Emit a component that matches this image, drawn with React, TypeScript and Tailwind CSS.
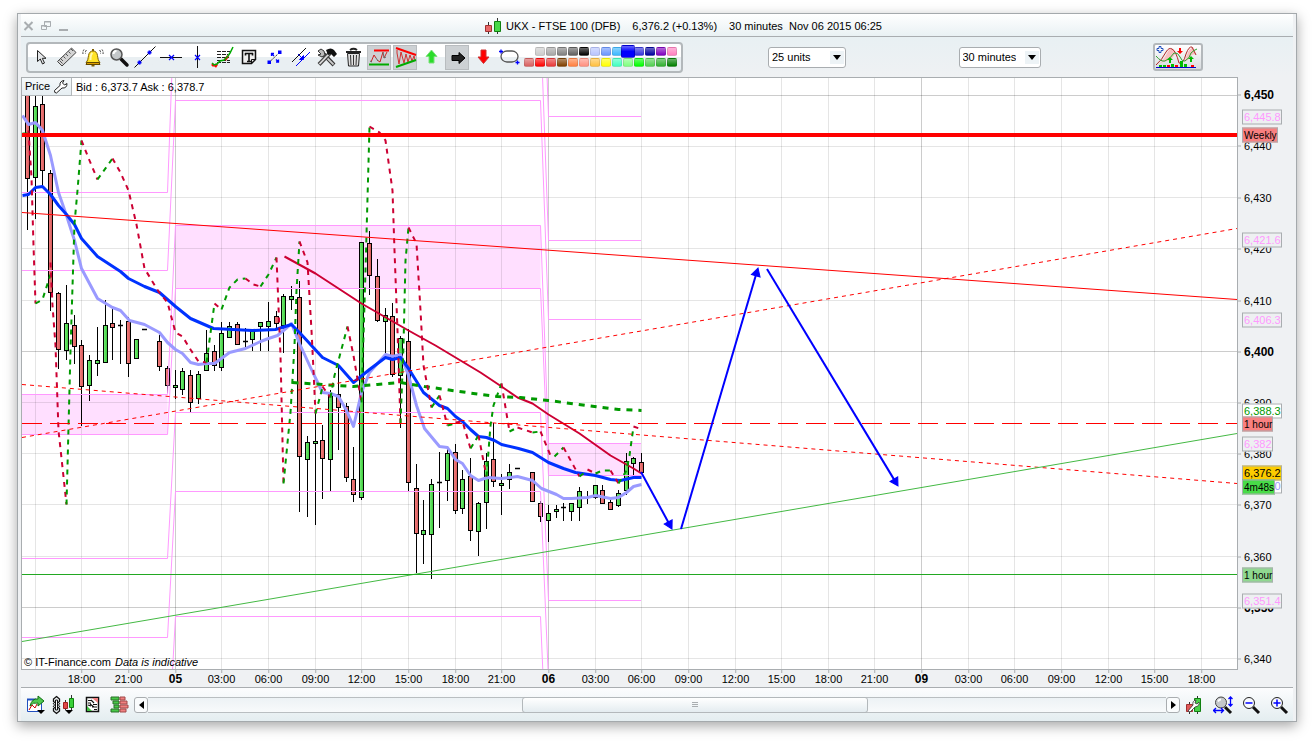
import { useState } from "react";
import type { ReactNode } from "react";

type Pt = [number, number];
// x, wick top, body top, body bottom, wick bottom, kind (g up, r down, d doji, n no body)
type Candle = [number, number, number, number, number, string];

const RED = "#cc0033";
const GREEN = "#009900";

// visible area of the chart canvas
const VIEW = { x: 22, y: 78, w: 1215, h: 591 };

const candles: Candle[] = [
  [27, 80, 80, 178, 229, "r"], [35, 80, 106, 177, 218, "g"], [42, 80, 104, 170, 186, "r"],
  [50, 170, 173, 292, 310, "r"], [58, 292, 293, 349, 368, "r"], [66, 285, 323, 350, 359, "g"],
  [74, 315, 325, 346, 363, "r"], [81, 340, 345, 386, 425, "r"], [89, 355, 360, 385, 400, "g"],
  [97, 327, 360, 363, 375, "g"], [105, 300, 325, 362, 362, "g"], [112, 308, 323, 327, 359, "r"],
  [120, 320, 325, 325, 363, "d"], [128, 317, 321, 363, 376, "r"], [136, 339, 339, 358, 358, "g"],
  [144, 329, 329, 329, 329, "d"], [159, 335, 341, 366, 370, "r"], [167, 366, 368, 385, 392, "r"],
  [175, 370, 385, 387, 398, "g"], [182, 368, 371, 389, 394, "g"], [190, 370, 375, 402, 411, "r"],
  [198, 371, 374, 398, 403, "g"], [206, 330, 353, 370, 370, "g"], [214, 345, 351, 365, 370, "r"],
  [221, 322, 333, 367, 370, "g"], [229, 322, 326, 337, 337, "g"], [237, 322, 324, 344, 344, "r"],
  [245, 328, 341, 341, 346, "d"], [252, 330, 331, 339, 350, "g"], [260, 322, 322, 326, 350, "g"],
  [268, 302, 321, 326, 350, "g"], [276, 311, 316, 323, 327, "r"], [283, 294, 296, 325, 352, "g"],
  [291, 286, 296, 299, 309, "g"], [299, 281, 297, 456, 511, "r"], [307, 436, 442, 459, 516, "g"],
  [315, 413, 441, 443, 524, "g"], [322, 425, 440, 458, 498, "r"], [330, 390, 393, 459, 491, "g"],
  [338, 366, 394, 407, 449, "r"], [346, 403, 406, 477, 481, "r"], [353, 447, 479, 494, 501, "r"],
  [361, 242, 242, 497, 499, "g"], [369, 231, 243, 275, 294, "r"], [377, 259, 276, 320, 321, "r"],
  [385, 308, 315, 321, 353, "g"], [392, 303, 316, 374, 376, "r"], [400, 336, 338, 375, 427, "g"],
  [408, 329, 341, 482, 491, "r"], [416, 464, 488, 533, 572, "r"], [423, 500, 530, 534, 563, "g"],
  [431, 479, 484, 534, 578, "g"], [439, 452, 482, 482, 527, "d"], [447, 449, 453, 480, 500, "g"],
  [455, 444, 452, 510, 513, "r"], [462, 470, 479, 508, 513, "g"], [470, 458, 476, 530, 540, "r"],
  [478, 502, 503, 531, 555, "g"], [486, 453, 461, 502, 528, "g"], [493, 423, 459, 481, 486, "r"],
  [501, 474, 483, 485, 514, "g"], [509, 464, 472, 479, 488, "g"], [517, 468, 468, 468, 468, "d"],
  [532, 472, 472, 501, 501, "r"], [540, 501, 503, 516, 521, "r"], [548, 505, 513, 520, 541, "g"],
  [556, 505, 509, 511, 517, "g"], [563, 503, 507, 507, 520, "d"], [571, 503, 503, 511, 520, "g"],
  [579, 487, 491, 507, 520, "g"], [587, 491, 497, 497, 503, "n"], [595, 485, 485, 497, 498, "g"],
  [602, 485, 490, 503, 503, "r"], [610, 500, 502, 509, 509, "r"], [618, 490, 493, 505, 506, "g"],
  [626, 453, 461, 490, 494, "g"], [633, 457, 458, 463, 474, "g"], [641, 453, 462, 472, 473, "r"],
];

const slowAverage: Pt[] = [
  [22, 195], [28, 194], [35, 187], [42, 186], [50, 194], [58, 205], [66, 214], [74, 224], [81, 238],
  [97, 256], [120, 271], [128, 278], [144, 286], [159, 292], [175, 306], [190, 318], [213, 328],
  [252, 330], [275, 329], [291, 324], [299, 332], [322, 357], [338, 365], [353, 382], [369, 369],
  [385, 357], [392, 359], [400, 357], [408, 368], [423, 392], [439, 405], [447, 408], [455, 416],
  [462, 421], [470, 429], [478, 436], [486, 437], [494, 440], [501, 444], [518, 448], [532, 452],
  [548, 462], [563, 468], [575, 472], [595, 475], [610, 479], [620, 480], [633, 477], [641, 477],
];

const fastAverage: Pt[] = [
  [22, 115], [28, 124], [35, 122], [42, 130], [50, 155], [58, 192], [66, 215], [74, 240], [81, 268],
  [97, 298], [112, 307], [120, 310], [129, 320], [144, 324], [159, 332], [167, 342], [175, 349],
  [182, 353], [190, 362], [198, 364], [206, 363], [214, 363], [229, 352], [245, 348], [260, 341],
  [268, 338], [277, 335], [283, 330], [291, 323], [299, 343], [310, 367], [322, 392], [330, 393],
  [338, 396], [346, 410], [353, 426], [361, 392], [369, 372], [385, 354], [392, 356], [400, 354],
  [408, 375], [416, 405], [424, 428], [439, 446], [447, 447], [455, 459], [462, 463], [470, 475],
  [478, 480], [487, 477], [501, 478], [517, 476], [532, 480], [541, 488], [556, 494], [563, 498],
  [571, 498], [587, 497], [595, 495], [610, 498], [618, 497], [626, 492], [633, 486], [641, 484],
];

const longAverage: Pt[] = [
  [284, 256], [315, 273], [361, 303], [408, 330], [435, 345], [480, 372], [501, 386], [517, 397],
  [532, 403], [548, 414], [579, 433], [610, 455], [633, 468], [641, 473],
];

const thickDashes: Pt[] = [
  [292, 382], [322, 384], [353, 386], [377, 384], [400, 382], [424, 386], [480, 394], [497, 396],
  [520, 397], [548, 400], [594, 406], [618, 409], [641, 410],
];

const stops: [string, Pt[]][] = [
  [RED, [[28, 130], [31, 177], [33, 245], [35, 303]]],
  [GREEN, [[22, 133], [27, 133]]],
  [GREEN, [[35, 303], [42, 299], [50, 274]]],
  [RED, [[50, 262], [52, 305], [55, 345], [58, 430], [66, 504]]],
  [GREEN, [[66, 504], [70, 350], [74, 223], [77, 190], [81, 140]]],
  [RED, [[81, 140], [89, 160], [97, 179]]],
  [GREEN, [[97, 179], [112, 158]]],
  [RED, [[112, 158], [120, 172], [128, 190], [136, 224], [144, 268], [158, 291], [167, 302], [175, 332], [182, 336], [190, 349], [198, 361], [206, 362]]],
  [GREEN, [[206, 362], [214, 303]]],
  [RED, [[214, 303], [221, 309]]],
  [GREEN, [[221, 309], [229, 287], [237, 279], [245, 278]]],
  [RED, [[245, 278], [253, 284], [260, 286]]],
  [GREEN, [[260, 286], [268, 274], [276, 257]]],
  [RED, [[276, 257], [280, 355], [283, 483]]],
  [GREEN, [[283, 483], [290, 412], [294, 345], [296, 290], [299, 241]]],
  [RED, [[299, 241], [307, 262], [311, 330], [313, 370], [315, 413]]],
  [GREEN, [[315, 413], [322, 387]]],
  [RED, [[322, 386], [330, 397]]],
  [GREEN, [[330, 397], [334, 375], [347, 326]]],
  [RED, [[347, 326], [353, 355], [361, 402]]],
  [GREEN, [[361, 402], [365, 270], [369, 126]]],
  [RED, [[369, 126], [379, 132], [385, 140], [392, 190], [394, 250], [397, 330], [400, 423]]],
  [GREEN, [[400, 423], [403, 345], [405, 260], [408, 227]]],
  [RED, [[408, 227], [416, 243], [420, 310], [423, 365], [431, 407]]],
  [GREEN, [[431, 407], [439, 395]]],
  [RED, [[439, 395], [447, 425]]],
  [GREEN, [[447, 425], [455, 423]]],
  [RED, [[455, 422], [462, 421], [470, 448]]],
  [GREEN, [[470, 448], [478, 435]]],
  [RED, [[478, 435], [486, 476]]],
  [GREEN, [[486, 476], [490, 425], [493, 405], [501, 383]]],
  [RED, [[501, 383], [509, 431]]],
  [GREEN, [[509, 431], [517, 427]]],
  [RED, [[517, 427], [532, 432]]],
  [GREEN, [[532, 432], [540, 431]]],
  [RED, [[540, 431], [550, 455]]],
  [GREEN, [[554, 456], [563, 447]]],
  [RED, [[563, 447], [579, 476]]],
  [GREEN, [[579, 476], [587, 470]]],
  [RED, [[587, 469], [595, 473]]],
  [GREEN, [[595, 473], [602, 470], [610, 470]]],
  [RED, [[610, 470], [618, 483]]],
  [GREEN, [[618, 483], [626, 470], [629, 455], [633, 426]]],
  [RED, [[633, 426], [639, 428]]],
];

// pivot levels of the three sessions and the steep lines that join them
const pivots = [
  { from: 22, to: 167.5, levels: [192.5, 270.5, 394.5, 434.5, 558.5, 637.5], zone: [394.5, 434.5] },
  { from: 175.5, to: 540.5, levels: [100.5, 225.5, 288.5, 412.5, 491.5, 616.5], zone: [225.5, 288.5] },
  { from: 548.5, to: 641, levels: [116.5, 240.5, 319.5, 443.5, 475.5, 600.5], zone: [443.5, 475.5] },
];
const joins: [number, number, number, number][] = [
  [167.5, 192.5, 175.5, -24], [167.5, 270.5, 175.5, 100.5], [167.5, 394.5, 175.5, 225.5],
  [167.5, 434.5, 175.5, 288.5], [167.5, 558.5, 175.5, 412.5], [167.5, 637.5, 175.5, 491.5],
  [167.5, 761, 175.5, 616.5],
  [540.5, -104, 548.5, 116.5], [540.5, 21, 548.5, 240.5], [540.5, 100.5, 548.5, 319.5],
  [540.5, 225.5, 548.5, 443.5], [540.5, 288.5, 548.5, 475.5], [540.5, 412.5, 548.5, 600.5],
  [540.5, 491.5, 548.5, 680], [540.5, 616.5, 548.5, 803],
];

const priceTicks: [number, string, boolean?][] = [
  [95, "6,450", true], [146, "6,440"], [197, "6,430"], [248, "6,420"], [300, "6,410"], [351, "6,400", true],
  [402, "6,390"], [453, "6,380"], [504, "6,370"], [556, "6,360"], [607, "6,350", true], [658, "6,340"],
];

const timeTicks: [number, string, boolean?][] = [
  [81, "18:00"], [128, "21:00"], [175, "05", true], [221, "03:00"], [268, "06:00"], [315, "09:00"],
  [361, "12:00"], [408, "15:00"], [455, "18:00"], [501, "21:00"], [548, "06", true], [595, "03:00"],
  [641, "06:00"], [688, "09:00"], [735, "12:00"], [781, "15:00"], [828, "18:00"], [874, "21:00"],
  [921, "09", true], [968, "03:00"], [1014, "06:00"], [1061, "09:00"], [1108, "12:00"],
  [1154, "15:00"], [1201, "18:00"],
];

const pivotTag = "border-[#a9adb0] bg-[#eef0f2] text-[#ff99ff] text-[11px]";
const priceTags: [number, string, string][] = [
  [116, "6,445.8", pivotTag],
  [135, "Weekly", "border-[#a9adb0] bg-[#f88080] text-black text-[10px]"],
  [240, "6,421.6", pivotTag],
  [319, "6,406.3", pivotTag],
  [410, "6,388.3", "border-[#a9adb0] bg-white text-[#009900] text-[11px]"],
  [423, "1 hour", "border-[#a9adb0] bg-[#f88080] text-black text-[10px]"],
  [443, "6,382", pivotTag],
  [485, "6,374.0", "border-[#a9adb0] bg-white text-[#9a9aff] text-[11px]"],
  [472, "6,376.2", "border-[#a9adb0] bg-[#fccc00] text-black text-[11px]"],
  [486, "4m48s", "border-[#a9adb0] bg-[#48dc48] text-black text-[10px]"],
  [574, "1 hour", "border-[#a9adb0] bg-[#90d890] text-black text-[10px]"],
  [600, "6,351.4", pivotTag],
];

const topColors = [
  "#cccccc", "#a6a6a6", "#808080", "#606060", "#000000", "#b8c4ff", "#6a96ff", "#3cb8ff",
  "#0000ff", "#3333dd", "#0000a0", "#8000c0", "#ff80c0",
];
const bottomColors = [
  "#d86060", "#ff0000", "#e83838", "#804000", "#ff8040", "#ff9080", "#ffc040", "#ffff00",
  "#40ffc0", "#80ff80", "#00ff00", "#50d050", "#30b030", "#008000",
];

function points(list: Pt[]) {
  return list.map(([x, y]) => `${x + 0.5},${y + 0.5}`).join(" ");
}

function left(x: number) {
  return `${((x - VIEW.x + 1.5) / (VIEW.w + 2)) * 100}%`;
}

function top(y: number) {
  return `${((y - VIEW.y + 1.5) / (VIEW.h + 2)) * 100}%`;
}

function Icon({ children, w = 24, h = 24 }: { children: ReactNode; w?: number; h?: number }) {
  return (
    <svg width={w} height={h} viewBox={`0 0 ${w} ${h}`} fill="none" aria-hidden="true" className="shrink-0">
      {children}
    </svg>
  );
}

function Magnifier() {
  return (
    <>
      <path d="M14 14l6 6" stroke="#111" strokeWidth="3.5" strokeLinecap="round" />
      <circle cx="9.500" cy="9.500" r="5.500" fill="#c4c8ca" stroke="#555" strokeWidth="1.500" />
      <path d="M6.500 9c0-2 1.500-3 3-3" stroke="#fff" strokeWidth="2" />
    </>
  );
}

const tools: { label: string; pressed?: boolean; icon: ReactNode }[] = [
  { label: "Select", icon: <path d="M8.500 5.500v11l2.800-2.500 2.200 5 2-1-2.200-4.700h3.700z" fill="#e4e6e8" stroke="#222" /> },
  {
    label: "Ruler",
    icon: (
      <>
        <path d="M2.500 16.500L16.500 3l4.500 4.500L7 21z" fill="#d4d4d4" stroke="#444" />
        <path d="M6 14l2 2M8.500 11.500l2 2M11 9l2 2M13.500 6.500l2 2M16 4l2 2M4.500 15.500l3 3" stroke="#555" />
      </>
    ),
  },
  {
    label: "Alert",
    icon: (
      <>
        <path d="M5 17.500c2-2 2-4 2.500-7 .5-3 2-4.500 4.500-4.500s4 1.500 4.500 4.500c.5 3 .5 5 2.500 7z" fill="#ffe326" stroke="#806000" />
        <path d="M9.500 15c0-4 .5-6 2-7" stroke="#fff8b0" strokeWidth="2" />
        <path d="M6 17.500h12l1 2H5z" fill="#e0a000" stroke="#604800" />
        <path d="M10.500 20h3v1.500h-3zM11 4h2v2h-2z" fill="#806000" />
        <path d="M5.500 5Q4 6.500 4.500 8.500M3 4.500Q1.500 6.500 2 9M18.500 5q1.500 1.500 1 3.500M21 4.500q1.500 2 1 4.500" stroke="#333" strokeDasharray="2 1" />
      </>
    ),
  },
  { label: "Zoom", icon: <Magnifier /> },
  {
    label: "Segment",
    icon: (
      <>
        <path d="M1.500 22.500L22.500 1.500" stroke="#111" />
        <path d="M4.500 17.500h4M6.500 15.500v4M14.500 7.500h4M16.500 5.500v4" stroke="#00f" strokeWidth="2" />
      </>
    ),
  },
  { label: "Horizontal line", icon: <path d="M1 12.500h22" stroke="#111" /> },
  { label: "Vertical line", icon: <path d="M12.500 1v22" stroke="#111" /> },
  {
    label: "Fibonacci",
    icon: (
      <>
        <path d="M6 6.500h13M6 9.500h11M6 12.500h12M6 15.500h13M6 17.500h13" stroke="#222" strokeDasharray="4 1" />
        <path d="M1 19l2 2M4 22l2-3M14 15l3-4" stroke="#f00" strokeWidth="2.500" />
        <path d="M1 18l2 2 3-1 3-3 4-1 4-4 2-3 3-6" stroke="#0a0" strokeWidth="1.500" />
      </>
    ),
  },
  {
    label: "Text",
    icon: (
      <>
        <path d="M5.500 5.500h13v9l-4 4h-9z" fill="#eee" stroke="#111" strokeWidth="1.500" />
        <path d="M18.500 14.500h-4v4" stroke="#111" />
        <path d="M8 8.500h8M12 8.500v8M10 16.500h4M8.500 8v2.500M15.500 8v2.500" stroke="#111" strokeWidth="1.600" />
      </>
    ),
  },
  {
    label: "Arrow",
    icon: (
      <>
        <path d="M6 17.500L17 7" stroke="#222" strokeDasharray="2 1" />
        <path d="M4.500 15.500h3.500V19H4.500zM15 5.500h3.500V9H15z" fill="#00f" />
        <path d="M8 8.500h3M8.500 8v3M8.500 8.500l2.500 2.500M16 17h-3M15.500 17.500v-3M15.500 17l-2.500-2.500" stroke="#00f" strokeWidth="1.300" />
      </>
    ),
  },
  {
    label: "Parallel",
    icon: (
      <>
        <path d="M3 17L17 3" stroke="#111" />
        <path d="M7 21L21 7" stroke="#00f" />
        <path d="M9 9l5 5" stroke="#00f" />
        <path d="M14.500 10.500v4h-4z" fill="#00f" stroke="#00f" />
      </>
    ),
  },
  {
    label: "Settings",
    icon: (
      <>
        <path d="M19 20L8.500 9" stroke="#333" strokeWidth="4" />
        <path d="M18.500 19.500L8 9" stroke="#ccc" strokeWidth="1.800" />
        <path d="M3 6l3-2 3 2 1 4-3 2-4-2 3-1z" fill="#bbb" stroke="#333" />
        <path d="M4 19.500L15 8" stroke="#444" strokeWidth="4" />
        <path d="M4.500 19L14 9" stroke="#ddd" strokeWidth="1.800" />
        <path d="M11 5q5-3 8 0l3 4-3 3-3-3-3 1z" fill="#111" />
      </>
    ),
  },
  {
    label: "Delete",
    icon: (
      <>
        <path d="M6.500 8.500h12l-1 12.500h-10z" fill="#e0e0e0" stroke="#222" />
        <path d="M9.500 10l.5 10M12.500 10v10M15.500 10L15 20" stroke="#333" />
        <path d="M5 7h15M9 5q3.500-2.500 7 0" stroke="#222" strokeWidth="2" />
      </>
    ),
  },
  {
    label: "Supports and resistances",
    pressed: true,
    icon: (
      <>
        <path d="M3 16l3-7 2 3M9 14l3 2 3-10M19 6l-3 6" stroke="#c22" />
        <path d="M2 15l2 1M8 12l2 3M15 6l1 6 2-1" stroke="#666" />
        <path d="M6 4.500h15" stroke="#f00" strokeWidth="2" />
        <path d="M1 18.500h20" stroke="#0a0" strokeWidth="2" />
      </>
    ),
  },
  {
    label: "Triangles",
    pressed: true,
    icon: (
      <>
        <path d="M3 4v3l2 11 2-12 3 11 2-9 2 8 2-7 2 6 2-5 1 4" stroke="#d03030" />
        <path d="M2 2l20 7" stroke="#f00" strokeWidth="2" />
        <path d="M2 21l20-7" stroke="#0a0" strokeWidth="2" />
      </>
    ),
  },
  { label: "Buy", icon: <path d="M12.500 5l5.500 6.500h-3V18h-5v-6.500H7z" fill="#2bdc2b" stroke="#7ae07a" /> },
  {
    label: "Next",
    pressed: true,
    icon: <path d="M6 9.500h7V6.500l6 5.500-6 5.500v-3H6z" fill="#222" stroke="#000" />,
  },
  { label: "Sell", icon: <path d="M10 5h5v7h3l-5.500 6.500L7 12h3z" fill="#f00" stroke="#c33" /> },
  {
    label: "Ellipse",
    icon: (
      <>
        <rect x="4" y="6" width="17" height="11" rx="6" stroke="#555" strokeWidth="1.300" />
        <path d="M2 6.500h4M4 4.500v4M18.500 17.500h4M20.500 15.500v4" stroke="#00f" strokeWidth="1.300" />
      </>
    ),
  },
];

function Toolbar() {
  const [color, setColor] = useState("#0000ff");
  const swatch = (c: string) => (
    <button
      key={c}
      aria-label={`Colour ${c}`}
      onClick={() => setColor(c)}
      className={
        c === color
          ? "relative z-10 -m-[2px] h-[13px] w-[14px] rounded-[2px] border border-black/20 bg-linear-to-b from-white/40 via-transparent to-transparent"
          : "h-[9px] w-[10px] rounded-[2px] border border-black/10 bg-linear-to-b from-white/40 to-transparent"
      }
      style={{ backgroundColor: c }}
    />
  );

  return (
    <div className="flex h-[31px] items-center rounded border-2 border-[#b3b8bb] bg-linear-to-b from-white from-50% to-[#e9eff2] to-50%">
      {tools.map((tool) => (
        <button
          key={tool.label}
          aria-label={tool.label}
          className={
            tool.pressed
              ? "mx-px h-[25px] w-6 border border-[#b8bcbf] bg-[#cdd1d4]"
              : "h-[25px] w-[26px] pl-px"
          }
        >
          <Icon>
            {tool.icon}
            {tool.label.endsWith(" line") && (
              <path d="M10 10l5 5M15 10l-5 5" stroke="#00f" strokeWidth="1.200" />
            )}
          </Icon>
        </button>
      ))}
      <div className="ml-[2px] flex flex-col items-end gap-[2px] pr-1">
        <div className="flex gap-px">{topColors.map(swatch)}</div>
        <div className="flex gap-px">{bottomColors.map(swatch)}</div>
      </div>
    </div>
  );
}

function Dropdown({ label, value, options }: { label: string; value: string; options: string[] }) {
  return (
    <div className="relative">
      <select
        aria-label={label}
        defaultValue={value}
        className="h-[21px] w-full appearance-none rounded-[3px] border border-[#a9adb0] bg-white pr-6 pl-[3px] text-[11px] text-black"
      >
        {options.map((o) => (
          <option key={o}>{o}</option>
        ))}
      </select>
      <span className="pointer-events-none absolute inset-y-1 right-[2px] flex w-[14px] items-center justify-center bg-[#edf3f6]">
        <svg width="8" height="5" viewBox="0 0 8 5" aria-hidden="true">
          <path d="M0 0h8L4 5z" />
        </svg>
      </span>
    </div>
  );
}

function Arrow({ from, to }: { from: Pt; to: Pt }) {
  const len = Math.hypot(to[0] - from[0], to[1] - from[1]);
  const angle = (Math.atan2(to[1] - from[1], to[0] - from[0]) * 180) / Math.PI;
  return (
    <g transform={`translate(${from[0]} ${from[1]}) rotate(${angle})`} stroke="#0000ff" fill="#0000ff">
      <path d={`M0 0H${len - 6}`} strokeWidth="2" />
      <path d={`M${len} 0l-8-4.500v9z`} strokeWidth="1" />
    </g>
  );
}

function Plot() {
  return (
    <svg
      viewBox={`${VIEW.x} ${VIEW.y} ${VIEW.w} ${VIEW.h}`}
      preserveAspectRatio="none"
      className="absolute inset-0 h-full w-full"
      fill="none"
      role="img"
      aria-label="FTSE 100 candlestick chart"
    >
      <defs>
        <clipPath id="below-header">
          <rect x="22" y="96" width="1215" height="573" />
        </clipPath>
        <linearGradient id="up">
          <stop offset="0" stopColor="#7cf07c" />
          <stop offset="1" stopColor="#36c836" />
        </linearGradient>
        <linearGradient id="down">
          <stop offset="0" stopColor="#f48484" />
          <stop offset="1" stopColor="#d65858" />
        </linearGradient>
      </defs>

      {/* pivot zones */}
      {pivots.map((p) => (
        <rect key={p.from} x={p.from} y={p.zone[0]} width={p.to - p.from} height={p.zone[1] - p.zone[0]} fill="#ffdfff" />
      ))}

      {/* grid */}
      <path d="M35.500 78V669" stroke="#000" strokeOpacity="0.1" />
      {timeTicks.map(([x, , strong]) => (
        <path key={x} d={`M${x + 0.5} 78V669`} stroke="#000" strokeOpacity={strong ? 0.2 : 0.1} />
      ))}
      {priceTicks.map(([y, , strong]) => (
        <path key={y} d={`M22 ${y + 0.5}H1237`} stroke="#000" strokeOpacity={strong ? 0.2 : 0.1} />
      ))}

      {/* candles */}
      <g clipPath="url(#below-header)">
        {candles.map(([x, hi, t, b, lo, kind]) => (
          <g key={x} stroke="#000">
            <path d={`M${x + 0.5} ${hi}V${lo + 1}`} />
            {kind === "d" && <path d={`M${x - 2} ${t + 0.5}h5`} strokeWidth="1.500" />}
            {(kind === "g" || kind === "r") && (
              <rect x={x - 1.5} y={t + 0.5} width="4" height={Math.max(b - t, 2)} fill={kind === "g" ? "url(#up)" : "url(#down)"} />
            )}
          </g>
        ))}
      </g>

      {/* pivot levels */}
      <g stroke="#ff99ff">
        {pivots.map((p) => p.levels.map((y) => <path key={`${p.from}-${y}`} d={`M${p.from} ${y}H${p.to}`} />))}
        {joins.map(([x1, y1, x2, y2]) => (
          <path key={`${x1}-${y1}`} d={`M${x1} ${y1}L${x2} ${y2}`} />
        ))}
      </g>

      {/* moving averages */}
      <g strokeLinejoin="round">
        <polyline points={points(fastAverage)} stroke="#9a9aff" strokeWidth="3" />
        <polyline points={points(slowAverage)} stroke="#0032ff" strokeWidth="3" />
        <polyline points={points(longAverage)} stroke={RED} strokeWidth="2" />
        <polyline points={points(thickDashes)} stroke={GREEN} strokeWidth="3" strokeDasharray="6 6" />
      </g>
      {stops.map(([color, list], i) => (
        <polyline key={i} points={points(list)} stroke={color} strokeWidth="2" strokeDasharray="5 5" />
      ))}

      {/* trend lines and alerts */}
      <path d="M22 384.500L1237 483.500M22 437.500L1237 228.500" stroke="#ff0000" strokeDasharray="4 4" />
      <path d="M22 212.500L1237 299.500" stroke="#ff0000" />
      <path d="M22 641.500L1237 433.500" stroke="#44b944" />
      <path d="M22 574.500H1237" stroke="#22a822" />
      <path d="M22 423.500H1237" stroke="#ff0000" strokeDasharray="20 8" />
      <path d="M22 135H1237" stroke="#ff0000" strokeWidth="4" />

      <Arrow from={[641, 472]} to={[672, 529]} />
      <Arrow from={[681, 529]} to={[758, 268]} />
      <Arrow from={[767, 269]} to={[898, 486]} />
    </svg>
  );
}

function CandlePair() {
  return (
    <Icon w={17} h={16}>
      <path d="M3.500 4v12M12.500 0v16" stroke="#333" />
      <path d="M.500 7.500h6v6h-6z" fill="#e86868" stroke="#a03030" />
      <path d="M9.500 3.500h6v10h-6z" fill="#48d848" stroke="#108010" />
    </Icon>
  );
}

function ZoomIcon({ sign }: { sign: string }) {
  return (
    <Icon w={20} h={20}>
      <path d="M12 12l6 6" stroke="#111" strokeWidth="3" />
      <circle cx="8" cy="8" r="5.500" fill="#f8fafc" stroke="#222" />
      <path d={sign === "+" ? "M4.500 8h7M8 4.500v7" : "M4.500 8h7"} stroke="#00f" strokeWidth="1.500" />
    </Icon>
  );
}

function BottomBar() {
  return (
    <div className="flex h-[33px] shrink-0 items-center bg-linear-to-b from-[#fcfdfe] to-[#e4edf0] pr-1 pl-[5px]">
      <button aria-label="Export" className="w-[25px]">
        <Icon w={20} h={20}>
          <path d="M1.500 4.500h14v12h-14z" fill="#fff" stroke="#2050c0" />
          <path d="M1 4.500h9" stroke="#2050c0" strokeWidth="2" />
          <path d="M3 15l3-5 3 3 2-4" stroke="#c00" />
          <path d="M4 11q2-8 8-7V1l6 5-6 5V8q-5-1-8 3z" fill="#50c850" stroke="#107010" />
          <path d="M11 15h8l-4 4z" fill="#000" />
        </Icon>
      </button>
      <button aria-label="Linked charts" className="mr-2 w-[25px]">
        <Icon w={25} h={20}>
          <path d="M5.500 1.500l3 2.500v2.500l-3 2.500-3-2.500V4zM5.500 11l3 2.500V16l-3 2.500-3-2.500v-2.500z" stroke="#111" strokeWidth="1.300" />
          <path d="M4.500 5h2v10h-2z" fill="#fff" stroke="#111" />
          <path d="M2 8l1.500 2L2 12M9 8l-1.500 2L9 12" stroke="#111" />
          <path d="M14.500 5v10M20.500 0v15" stroke="#333" />
          <path d="M12.500 7.500h4v6h-4z" fill="#e04848" stroke="#a02020" />
          <path d="M18.500 3.500h4v9h-4z" fill="#38d038" stroke="#108010" />
          <path d="M14 15h8l-4 4z" fill="#000" />
        </Icon>
      </button>
      <button aria-label="Orders" className="mr-[10px] w-4">
        <Icon w={16} h={18}>
          <path d="M2.500 1.500h12v14h-12z" fill="#fff" stroke="#111" strokeWidth="1.500" />
          <path d="M8 2h6v5z" fill="#f08080" />
          <path d="M3 10l5 5H3z" fill="#40c040" />
          <path d="M4 4.500h4M4 7h3M9 8.500h4M4 9l3 1M8 11h5M10 13.500h3M7 4l3 3M6 8l4 3" stroke="#111" strokeWidth="1.200" />
        </Icon>
      </button>
      <button aria-label="Market depth" className="mr-1 w-5">
        <Icon w={20} h={18}>
          <path d="M1 1h8v3H1zM3 5h6v3H3zM4 9h5v3H4zM1 13h8v3H1z" fill="#48c848" stroke="#287028" />
          <path d="M10 1h5v3h-5zM10 5h7v3h-7zM10 9h8v3h-8zM10 13h6v3h-6z" fill="#f08080" stroke="#a04848" />
        </Icon>
      </button>
      <div className="flex flex-1">
        <button aria-label="Scroll left" className="flex h-[16px] w-[14px] items-center justify-center rounded-[3px] border border-[#a9adb0] bg-[#fafcfd]">
          <Icon w={5} h={8}><path d="M5 0v8L0 4z" fill="#000" /></Icon>
        </button>
        <div role="scrollbar" aria-controls="chart" aria-valuenow={52} className="flex h-[16px] flex-1 border-y border-[#b9bec1] bg-linear-to-b from-[#edf2f5] to-[#f8fafb]">
          <div className="flex-[375]" />
          <div className="-my-px flex flex-[344] items-center justify-center rounded-[3px] border border-[#b3b8bb] bg-linear-to-b from-white to-[#e4ecf0]">
            <Icon w={6} h={6}><path d="M0 .500h6M0 2.500h6M0 4.500h6" stroke="#a9adb0" /></Icon>
          </div>
          <div className="flex-[299]" />
        </div>
        <button aria-label="Scroll right" className="flex h-[16px] w-[14px] items-center justify-center rounded-[3px] border border-[#a9adb0] bg-[#fafcfd]">
          <Icon w={5} h={8}><path d="M0 0v8l5-4z" fill="#000" /></Icon>
        </button>
      </div>
      <button aria-label="Chart settings" className="ml-[5px] w-7">
        <Icon w={18} h={20}>
          <path d="M4.500 7v12M12.500 1v18" stroke="#333" />
          <path d="M1.500 9.500h6v7h-6z" fill="#e05858" stroke="#a03030" />
          <path d="M9.500 3.500h6v13h-6z" fill="#48d048" stroke="#108010" />
          <path d="M3 16l5-6q-1-4 3-5l-1 3 2 1 2-2q1 4-4 5l-5 5z" fill="#fff" stroke="#333" strokeWidth="0.800" />
        </Icon>
      </button>
      <button aria-label="Fit zoom" className="w-7">
        <Icon w={22} h={20}>
          <path d="M12 12l6 6" stroke="#111" strokeWidth="3" />
          <circle cx="8" cy="7.500" r="5.500" fill="#c4c8ca" stroke="#444" />
          <path d="M5 6.500q1-2 3-2" stroke="#fff" strokeWidth="2" />
          <path d="M1 15.500h9M3 13l-2.500 2.500L3 18M8 13l2.500 2.500L8 18M17.500 2v9M15.500 4l2-2 2 2M15.500 9l2 2 2-2" stroke="#00f" strokeWidth="1.300" />
        </Icon>
      </button>
      <button aria-label="Zoom out" className="w-7"><ZoomIcon sign="-" /></button>
      <button aria-label="Zoom in" className="w-5"><ZoomIcon sign="+" /></button>
    </div>
  );
}

export default function App() {
  return (
    <div className="flex h-screen min-h-96 flex-col bg-white px-[17px] pt-[13px] pb-[21px] font-['Liberation_Sans',Arial,sans-serif] text-[11px] leading-[13px] text-black">
      <div className="flex min-h-0 flex-1 flex-col border border-[#a4a9ac] bg-[#eff1f3] px-[3px] shadow-[0_4px_12px_rgba(0,0,0,0.35)]">
        {/* Title bar */}
        <header className="relative flex h-[23px] shrink-0 items-center justify-center border-b border-[#a9adb0] bg-linear-to-b from-white to-[#e9f1f4] pt-[2px] pl-[53px]">
          <div className="absolute left-0 flex gap-1.5 text-[#a9adb0]">
            <button aria-label="Close">
              <Icon w={14} h={12}><path d="M3.500 2l8 8M11.500 2l-8 8" stroke="currentColor" strokeWidth="2" /></Icon>
            </button>
            <button aria-label="Restore">
              <Icon w={10} h={12}><path d="M3.500 1.500h6v5h-6zM.500 5.500h5v4h-5zM3 2h7M0 6h6" stroke="currentColor" /></Icon>
            </button>
            <button aria-label="Minimise">
              <Icon w={12} h={12}><path d="M2 10h9" stroke="currentColor" strokeWidth="2" /></Icon>
            </button>
          </div>
          <CandlePair />
          <h1 className="ml-1 flex gap-3 whitespace-nowrap">
            <span>UKX - FTSE 100 (DFB)</span>
            <span>6,376.2 (+0.13%)</span>
            <span>
              30 minutes&nbsp; Nov 06 2015 06:25
            </span>
          </h1>
        </header>

        {/* Toolbar */}
        <div className="flex h-10 shrink-0 items-center bg-linear-to-b from-[#e8f0f3] to-[#eff1f3] pl-[5px]">
          <Toolbar />
          <div className="flex flex-1 items-center justify-between pr-[90px] pl-[85px]">
            <div className="w-[78px]">
              <Dropdown label="Number of units" value="25 units" options={["25 units", "50 units", "100 units"]} />
            </div>
            <div className="w-[82px]">
              <Dropdown label="Time frame" value="30 minutes" options={["5 minutes", "30 minutes", "1 hour"]} />
            </div>
            <button aria-label="Add indicator" className="h-7 w-[50px] rounded-[3px] border-2 border-[#b3b8bb] bg-linear-to-b from-white to-[#d8dcdf]">
              <Icon w={46} h={24}>
                <path d="M3 20q6-5 9-12 3-6 6-4l3 3q-4 8-8 9-5 0-10 4z" fill="#f8c0c0" />
                <path d="M29 17q3-7 5-12l4-3 3 7q-6 0-8 6z" fill="#f8c0c0" />
                <path d="M1 20q6-5 10-13 3-5 6-3 4 2 7 14 4 2 7-9 3-8 6-7l4 8" stroke="#b02828" />
                <path d="M1 11q5 6 9 5 6-3 9-8 4-1 6 4 2 5 5 4 5-3 6-8 3-3 6-4" stroke="#30a030" />
                <path d="M4 20h3v2H4zM8 20h3v2H8zM16 19h3v3h-3zM25 16h3v6h-3zM29 19h3v3h-3z" fill="#0b0" />
                <path d="M12 20h3v2h-3zM20 20h3v2h-3zM36 20h3v2h-3z" fill="#f00" />
                <path d="M15 12l3 3h-2v3h-2v-3h-2zM36 11l3 3h-2v3h-2v-3h-2z" fill="#0b0" />
                <path d="M25 9l3-3h-2V3h-2v3h-2z" fill="#f00" />
                <path d="M4 1.500h2v2h2v2H6v2H4v-2H2v-2h2z" fill="#fff" stroke="#2050c0" />
                <path d="M1 22.500h40" stroke="#00c" />
              </Icon>
            </button>
          </div>
        </div>

        {/* Chart with price axis */}
        <main id="chart" className="flex min-h-0 flex-1">
          <section className="relative flex-1 border border-[#a9adb0] bg-white">
            <Plot />
            <div className="relative flex h-[18px] items-center">
              <button className="flex h-[18px] w-[50px] items-center justify-between border-r border-b border-[#b3b8bb] bg-linear-to-b from-[#f4f8fa] to-[#e6eef2] px-[3px]">
                Price
                <Icon w={15} h={15}>
                  <path d="M1.500 11.500L7 6.500Q6.500 2 11 1.500L9.500 4l2 2L14 4.500q0 5-5 4.500L3.500 14Q1 14 1.500 11.500z" stroke="#222" fill="#fff" />
                </Icon>
              </button>
              <p className="pl-1">Bid : 6,373.7 Ask : 6,378.7</p>
            </div>
            <p className="absolute bottom-0 left-[2px] flex gap-1">
              <span>© IT-Finance.com</span>
              <em>Data is indicative</em>
            </p>
          </section>
          <aside className="relative w-[55px]">
            {priceTicks.map(([y, text, strong]) => (
              <div key={text} className="absolute left-0 flex -translate-y-1/2 items-center gap-[3px]" style={{ top: top(y) }}>
                <span className="h-px w-[3px] bg-[#a9adb0]" />
                <span className={strong ? "text-[12px] font-bold" : ""}>{text}</span>
              </div>
            ))}
            {priceTags.map(([y, text, style]) => (
              <div
                key={text + y}
                className={`absolute left-1 flex h-[15px] -translate-y-1/2 items-center border pl-px whitespace-nowrap ${style}`}
                style={{ top: top(y) }}
              >
                {text}
              </div>
            ))}
          </aside>
        </main>

        {/* Time axis */}
        <div className="h-[18px] shrink-0 border-b border-[#a9adb0] pr-[55px]">
          <div className="relative">
            {timeTicks.map(([x, text, strong]) => (
              <div key={x} className="absolute top-0 flex -translate-x-1/2 flex-col items-center" style={{ left: left(x) }}>
                <span className="h-[3px] w-px bg-[#a9adb0]" />
                <span className={strong ? "text-[12px] font-bold" : ""}>{text}</span>
              </div>
            ))}
          </div>
        </div>

        <BottomBar />
      </div>
    </div>
  );
}
